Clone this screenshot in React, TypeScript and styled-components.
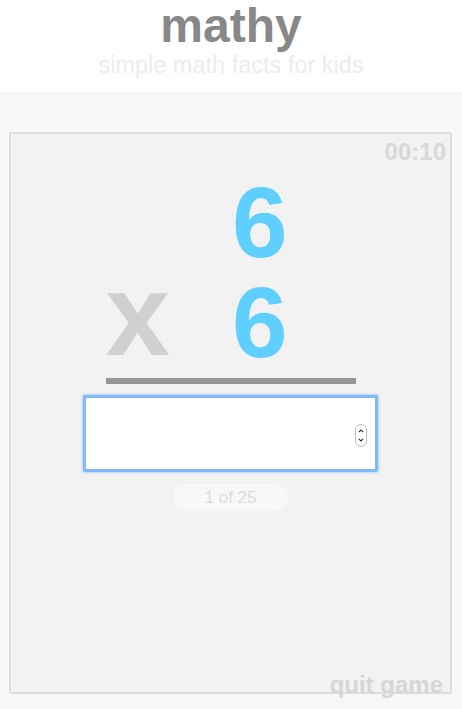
import React from 'react';
import styled, { createGlobalStyle } from 'styled-components';

const GlobalStyle = createGlobalStyle`
  html, body {
    margin: 0;
    padding: 0;
    background: #f7f7f7;
    font-family: "Liberation Sans", Arial, Helvetica, sans-serif;
  }
`;

const Page = styled.div`
  min-height: 100vh;
  display: flex;
  flex-direction: column;
`;

const Header = styled.header`
  background: #ffffff;
  text-align: center;
  padding: 0 0 15px;
`;

const Logo = styled.h1`
  margin: 0;
  font-size: 48px;
  line-height: 52px;
  font-weight: 700;
  color: #888888;
`;

const Tagline = styled.p`
  margin: 2px 0 0;
  font-size: 23.5px;
  line-height: 23px;
  color: #ececec;
`;

const Stage = styled.main`
  flex: 1;
  display: flex;
  flex-direction: column;
  padding: 40px 10px 15px 9px;
`;

const Card = styled.section`
  flex: 1;
  position: relative;
  display: flex;
  flex-direction: column;
  align-items: center;
  background: #f2f2f2;
  border: 2px solid #dddddd;
  border-radius: 2px;
`;

const TimerRow = styled.div`
  align-self: stretch;
  display: flex;
  justify-content: flex-end;
  padding: 4px 4px 0 0;
`;

const Timer = styled.span`
  font-size: 24px;
  font-weight: 700;
  color: #d8d8d8;
`;

const Problem = styled.div`
  width: 250px;
  margin-top: 6px;
`;

const Row = styled.div`
  display: flex;
  align-items: flex-start;
  height: 100px;
  line-height: 100px;
`;

const Operator = styled.span`
  font-size: 116px;
  line-height: 86px;
  font-weight: 700;
  color: #d0d0d0;
`;

const Digit = styled.span`
  font-size: 100px;
  font-weight: 700;
  color: #5fcfff;
  margin-left: auto;
  margin-right: 68px;
`;

const Bar = styled.div`
  height: 6px;
  margin-top: 6px;
  background: #959595;
`;

const AnswerBox = styled.div`
  position: relative;
  margin-top: 11px;
  width: 289px;
  height: 71px;
  background: #ffffff;
  border: 3px solid #7fbaf6;
  border-radius: 2px;
  box-shadow: 0 0 2px 1px #b5d5f7;
`;

const Answer = styled.input`
  width: 100%;
  height: 100%;
  box-sizing: border-box;
  border: none;
  outline: none;
  background: transparent;
  padding: 0 30px 0 8px;
  font-family: inherit;
  font-size: 40px;
  color: #555555;
  appearance: textfield;
  -moz-appearance: textfield;

  &::-webkit-inner-spin-button,
  &::-webkit-outer-spin-button {
    -webkit-appearance: none;
    margin: 0;
  }
`;

const Spinner = styled.svg`
  position: absolute;
  right: 8px;
  top: 26px;
  pointer-events: none;
`;

const Counter = styled.div`
  margin-top: 12px;
  width: 115px;
  height: 27px;
  border-radius: 14px;
  background: #f8f8f8;
  color: #dcdcdc;
  font-size: 17px;
  line-height: 27px;
  text-align: center;
`;

const QuitLink = styled.a`
  position: absolute;
  right: 7px;
  bottom: -7px;
  font-size: 24px;
  font-weight: 700;
  color: #d6d6d6;
  text-decoration: none;
  cursor: pointer;
`;

const App: React.FC = () => {
  return (
    <Page>
      <GlobalStyle />
      <Header>
        <Logo>mathy</Logo>
        <Tagline>simple math facts for kids</Tagline>
      </Header>
      <Stage>
        <Card>
          <TimerRow>
            <Timer>00:10</Timer>
          </TimerRow>
          <Problem>
            <Row>
              <Digit>6</Digit>
            </Row>
            <Row>
              <Operator>x</Operator>
              <Digit>6</Digit>
            </Row>
            <Bar />
          </Problem>
          <AnswerBox>
            <Answer type="number" aria-label="answer" />
            <Spinner width="12" height="23" viewBox="0 0 12 23">
              <rect x="0.5" y="0.5" width="11" height="22" rx="5.5" fill="#ffffff" stroke="#b8b8b8" />
              <path d="M3.8 8.2 L6 6 L8.2 8.2" fill="none" stroke="#333333" strokeWidth="1.1" />
              <path d="M3.8 14.8 L6 17 L8.2 14.8" fill="none" stroke="#333333" strokeWidth="1.1" />
            </Spinner>
          </AnswerBox>
          <Counter>1 of 25</Counter>
          <QuitLink>quit game</QuitLink>
        </Card>
      </Stage>
    </Page>
  );
};

export default App;
